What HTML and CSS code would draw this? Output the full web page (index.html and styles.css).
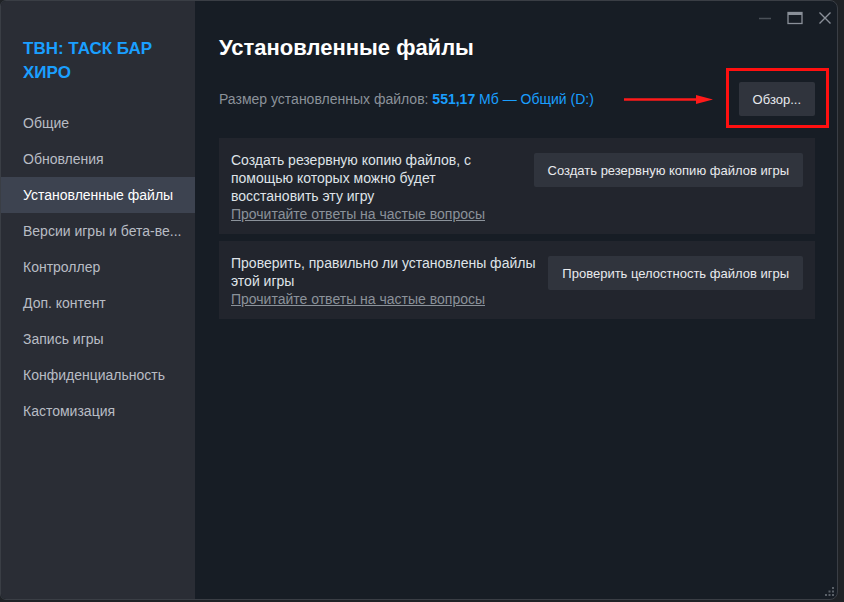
FILE: index.html
```html
<!DOCTYPE html>
<html lang="ru">
<head>
    <meta charset="UTF-8">
    <meta name="viewport" content="width=device-width, initial-scale=1.0">
    <title>Свойства</title>
    <link rel="stylesheet" href="styles.css">
</head>
<body>
    <div class="window">
        <aside class="sidebar">
            <h2 class="game-title">ТВН: ТАСК БАР ХИРО</h2>
            <nav class="menu">
                <a class="menu-item">Общие</a>
                <a class="menu-item">Обновления</a>
                <a class="menu-item active">Установленные файлы</a>
                <a class="menu-item">Версии игры и бета-ве...</a>
                <a class="menu-item">Контроллер</a>
                <a class="menu-item">Доп. контент</a>
                <a class="menu-item">Запись игры</a>
                <a class="menu-item">Конфиденциальность</a>
                <a class="menu-item">Кастомизация</a>
            </nav>
        </aside>

        <main class="content">
            <div class="titlebar">
                <span class="ctrl">
                    <svg width="14" height="14" viewBox="0 0 14 14"><path d="M1 7.5h12" stroke="#4a5058" stroke-width="1.5"/></svg>
                </span>
                <span class="ctrl">
                    <svg width="16" height="14" viewBox="0 0 16 14"><rect x="1" y="1.5" width="14" height="11" fill="none" stroke="#8a9099" stroke-width="1.3"/><path d="M1 3h14" stroke="#8a9099" stroke-width="2"/></svg>
                </span>
                <span class="ctrl">
                    <svg width="14" height="14" viewBox="0 0 14 14"><path d="M1.5 1.5l11 11M12.5 1.5l-11 11" stroke="#8a9099" stroke-width="1.4"/></svg>
                </span>
            </div>

            <h1 class="page-title">Установленные файлы</h1>

            <div class="size-row">
                <p class="size-info">Размер установленных файлов: <b>551,17</b> <span class="blue">Мб — Общий (D:)</span></p>
                <svg class="arrow" width="90" height="12" viewBox="0 0 90 12">
                    <path d="M0 6.5h74" stroke="#ff1a1a" stroke-width="2.5"/>
                    <path d="M72 2l17 4.5-17 4.5z" fill="#ff1a1a"/>
                </svg>
                <div class="marked">
                    <button class="btn">Обзор...</button>
                </div>
            </div>

            <div class="card">
                <div class="card-text">
                    <p>Создать резервную копию файлов, с помощью которых можно будет восстановить эту игру</p>
                    <a class="faq">Прочитайте ответы на частые вопросы</a>
                </div>
                <button class="btn">Создать резервную копию файлов игры</button>
            </div>

            <div class="card">
                <div class="card-text">
                    <p>Проверить, правильно ли установлены файлы этой игры</p>
                    <a class="faq">Прочитайте ответы на частые вопросы</a>
                </div>
                <button class="btn">Проверить целостность файлов игры</button>
            </div>

            <div class="grip">
                <svg width="10" height="10" viewBox="0 0 10 10" fill="#5a6068">
                    <rect x="7" y="0" width="2" height="2"/>
                    <rect x="3.5" y="3.5" width="2" height="2"/><rect x="7" y="3.5" width="2" height="2"/>
                    <rect x="0" y="7" width="2" height="2"/><rect x="3.5" y="7" width="2" height="2"/><rect x="7" y="7" width="2" height="2"/>
                </svg>
            </div>
        </main>
    </div>
</body>
</html>
```

FILE: styles.css
```css
body, html {
    margin: 0;
    height: 100%;
    background-color: #1f2226;
    font-family: Arial, "Liberation Sans", sans-serif;
    overflow: hidden;
}

.window {
    display: flex;
    width: 838px;
    height: 600px;
    box-sizing: border-box;
    border: 1px solid #3a3e45;
    border-radius: 6px 8px 8px 6px;
    overflow: hidden;
    background-color: #171d25;
}

.sidebar {
    width: 194px;
    flex-shrink: 0;
    background-color: #2a2d35;
    padding-top: 36px;
}

.game-title {
    margin: 0 0 20px 22px;
    font-size: 17px;
    line-height: 24px;
    font-weight: bold;
    color: #1a9fff;
    width: 150px;
}

.menu {
    display: flex;
    flex-direction: column;
}

.menu-item {
    display: block;
    height: 36px;
    line-height: 36px;
    padding-left: 22px;
    font-size: 14px;
    color: #b8bcc4;
    white-space: nowrap;
}

.menu-item.active {
    background-color: #3d4350;
    color: #ffffff;
}

.content {
    flex: 1;
    display: flex;
    flex-direction: column;
    padding: 0 22px 0 24px;
    position: relative;
}

.titlebar {
    height: 34px;
    display: flex;
    justify-content: flex-end;
    align-items: center;
    gap: 14px;
    margin-right: -22px;
    padding-right: 4px;
}

.ctrl {
    width: 16px;
    height: 16px;
    display: flex;
    align-items: center;
    justify-content: center;
}

.page-title {
    margin: 0;
    font-size: 22px;
    line-height: 26px;
    font-weight: bold;
    color: #ffffff;
}

.size-row {
    display: flex;
    align-items: center;
    margin-top: 21px;
    margin-bottom: 22px;
}

.size-info {
    margin: 0;
    font-size: 14px;
    color: #8b929a;
}

.size-info b {
    color: #1a9fff;
}

.blue {
    color: #1a9fff;
}

.arrow {
    margin-left: auto;
    margin-right: 25px;
}

.marked {
    position: relative;
}

.marked::after {
    content: "";
    position: absolute;
    top: -14px;
    bottom: -12px;
    left: -13px;
    right: -14px;
    border: 3px solid #ff1010;
}

.btn {
    height: 34px;
    padding: 0 14px;
    background-color: #30343d;
    color: #e8eaed;
    border: none;
    border-radius: 2px;
    font-family: inherit;
    font-size: 13px;
    white-space: nowrap;
    cursor: pointer;
}

.card {
    display: flex;
    align-items: flex-start;
    gap: 10px;
    background-color: #22252d;
    padding: 13px 12px 11px 12px;
    margin-bottom: 7px;
}

.card .btn {
    margin-top: 2px;
}

.card-text {
    flex: 1;
    font-size: 14px;
    line-height: 18px;
    color: #dfe3e8;
}

.card-text p {
    margin: 0;
}

.faq {
    color: #8b929a;
    text-decoration: underline;
}

.grip {
    position: absolute;
    right: 2px;
    bottom: 2px;
    line-height: 0;
}
```
